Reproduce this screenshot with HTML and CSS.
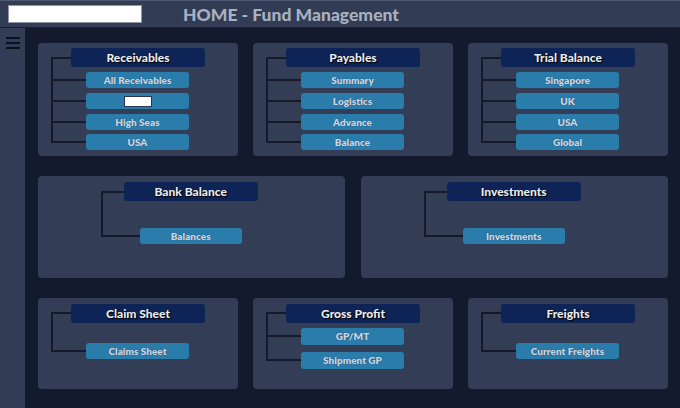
FILE: index.html
```html
<!DOCTYPE html>
<html lang="en">
<head>
  <meta charset="UTF-8">
  <title>HOME - Fund Management</title>
  <meta name="viewport" content="width=device-width, initial-scale=1.0">
  <link rel="stylesheet" href="styles.css">
</head>
<body>
  <header class="topbar">
    <div class="search"></div>
    <h1>HOME - Fund Management</h1>
  </header>
  <div class="layout">
    <aside class="sidebar">
      <svg class="menu" width="14" height="12" viewBox="0 0 14 12">
        <rect x="0" y="0" width="14" height="2" fill="#0c0f1c"/>
        <rect x="0" y="5" width="14" height="2" fill="#0c0f1c"/>
        <rect x="0" y="10" width="14" height="2" fill="#0c0f1c"/>
      </svg>
    </aside>
    <main class="board">
      <section class="row row-three r1">
        <div class="card">
          <div class="tree">
            <div class="node head">Receivables</div>
            <div class="node item">All Receivables</div>
            <div class="node item"><span class="blank"></span></div>
            <div class="node item">High Seas</div>
            <div class="node item">USA</div>
          </div>
        </div>
        <div class="card">
          <div class="tree">
            <div class="node head">Payables</div>
            <div class="node item">Summary</div>
            <div class="node item">Logistics</div>
            <div class="node item">Advance</div>
            <div class="node item">Balance</div>
          </div>
        </div>
        <div class="card">
          <div class="tree">
            <div class="node head">Trial Balance</div>
            <div class="node item">Singapore</div>
            <div class="node item">UK</div>
            <div class="node item">USA</div>
            <div class="node item">Global</div>
          </div>
        </div>
      </section>

      <section class="row row-two r2">
        <div class="card wide">
          <div class="tree far">
            <div class="node head">Bank Balance</div>
            <div class="node item">Balances</div>
          </div>
        </div>
        <div class="card wide">
          <div class="tree far">
            <div class="node head">Investments</div>
            <div class="node item">Investments</div>
          </div>
        </div>
      </section>

      <section class="row row-three r3">
        <div class="card">
          <div class="tree single">
            <div class="node head">Claim Sheet</div>
            <div class="node item">Claims Sheet</div>
          </div>
        </div>
        <div class="card">
          <div class="tree loose">
            <div class="node head">Gross Profit</div>
            <div class="node item">GP/MT</div>
            <div class="node item">Shipment GP</div>
          </div>
        </div>
        <div class="card">
          <div class="tree single">
            <div class="node head">Freights</div>
            <div class="node item">Current Freights</div>
          </div>
        </div>
      </section>
    </main>
  </div>
</body>
</html>
```

FILE: styles.css
```css
body {
  margin: 0;
  width: 680px;
  height: 408px;
  overflow: hidden;
  background: #141a2d;
  font-family: Lato, "Open Sans", sans-serif;
}
.topbar {
  height: 26px;
  border-top: 1px solid #4d576f;
  border-bottom: 1px solid #1b2133;
  background: #323c55;
  display: flex;
  align-items: center;
}
.search {
  width: 132px;
  height: 16px;
  margin-left: 8px;
  background: #fff;
  border: 1px solid #8e96a6;
}
.topbar h1 {
  margin: 0 0 0 41px;
  font-size: 17.5px;
  font-weight: 900;
  color: #a8b1c1;
}
.layout {
  display: flex;
  height: 380px;
}
.sidebar {
  width: 25px;
  background: #323c55;
  padding-top: 9px;
  box-sizing: border-box;
}
.menu {
  display: block;
  margin-left: 6px;
}
.board {
  flex: 1;
  padding: 14.5px 12px 0 13px;
  display: flex;
  flex-direction: column;
  gap: 20.5px;
}
.row {
  display: grid;
}
.row-three {
  grid-template-columns: repeat(3, 200px);
  gap: 15px;
}
.row-two {
  grid-template-columns: 306.5px 306.5px;
  gap: 16.5px;
}
.r1 { height: 113px; }
.r2 { height: 101.5px; }
.r3 { height: 90.5px; }

.card {
  background: #333d55;
  border-radius: 4px;
  padding: 5.5px 0 0 13px;
  box-sizing: border-box;
}
.card.wide {
  padding: 6.3px 0 0 62.7px;
}

/* tree with connector lines */
.tree {
  position: relative;
  display: flex;
  flex-direction: column;
  align-items: flex-start;
  gap: 4.7px;
  padding-left: 20px;
}
.tree::before {
  content: "";
  position: absolute;
  left: 0;
  top: 8.5px;
  bottom: 7px;
  width: 2px;
  background: #151a2a;
}
.node {
  position: relative;
  display: flex;
  align-items: center;
  justify-content: center;
  box-sizing: border-box;
}
.node::before {
  content: "";
  position: absolute;
  top: 50%;
  margin-top: -1px;
  right: 100%;
  height: 2px;
  background: #151a2a;
}
.head {
  width: 134px;
  height: 19px;
  background: #0e2356;
  border-radius: 3px;
  color: #e9edf3;
  font-size: 12px;
  font-weight: 900;
  text-shadow: 1px 1px 1px #000, -0.5px -0.5px 0.5px #000;
  margin-bottom: 0.7px;
}
.head::before {
  width: 20px;
}
.item {
  width: 103px;
  height: 16px;
  margin-left: 15px;
  background: #2a7cab;
  border-radius: 3px;
  color: #c9d5e3;
  font-size: 10px;
  font-weight: 800;
  text-shadow: 0 0 1px #1c3a55;
}
.item::before {
  width: 35px;
}

.tree.far {
  padding-left: 23px;
}
.tree.far .head {
  margin-bottom: 21.6px;
}
.tree.far .head::before {
  width: 23px;
}
.tree.far .item {
  width: 102px;
  margin-left: 16px;
}
.tree.far .item::before {
  width: 39px;
}
.tree.single .head {
  margin-bottom: 16.3px;
}
.tree.loose {
  gap: 7px;
}
.tree.loose .head {
  margin-bottom: -1.5px;
}
.tree.loose .item {
  height: 16.8px;
}
.tree.loose::before {
  bottom: 7.4px;
}

.blank {
  display: block;
  width: 28px;
  height: 11px;
  background: #fff;
  border: 1px solid #2b3550;
  box-sizing: border-box;
}
```
